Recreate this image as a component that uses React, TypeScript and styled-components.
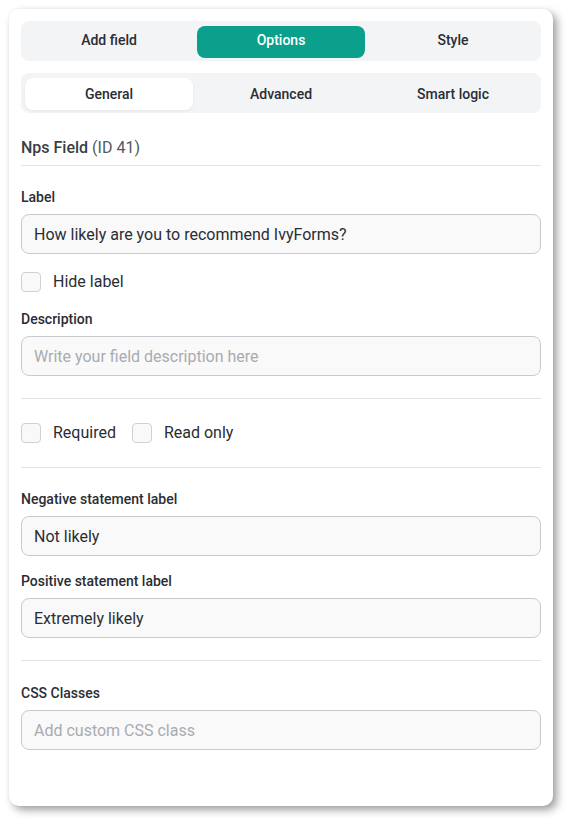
import React from "react";
import styled, { createGlobalStyle } from "styled-components";

const Global = createGlobalStyle`
  html, body { margin: 0; padding: 0; background: #ffffff; }
  body { font-family: Roboto, "Noto Sans", "Liberation Sans", sans-serif; color: #2a2d33; }
  * { box-sizing: border-box; }
`;

const Page = styled.div`
  padding: 9px 21px 22px 9px;
`;

const Card = styled.div`
  width: 544px;
  height: 797px;
  background: #ffffff;
  border-radius: 10px;
  padding: 12px 12px;
  box-shadow: 4px 4px 8px rgba(0, 0, 0, 0.38), 0 0 3px rgba(0, 0, 0, 0.04);
  display: flex;
  flex-direction: column;
`;

const TabBar = styled.div`
  display: grid;
  grid-template-columns: repeat(3, 1fr);
  height: 40px;
  padding: 5px 2px 3px;
  background: #f3f4f6;
  border-radius: 8px;
  & + & { margin-top: 12px; }
`;

const Tab = styled.div<{ $active?: boolean; $tone: "teal" | "white" }>`
  display: flex;
  align-items: center;
  justify-content: center;
  margin: 0 2px;
  padding-bottom: ${(p) => (p.$tone === "teal" ? "4px" : "0")};
  border-radius: 8px;
  font-size: 14px;
  font-weight: 500;
  color: ${(p) => (p.$active && p.$tone === "teal" ? "#ffffff" : "#2a2d33")};
  background: ${(p) =>
    p.$active ? (p.$tone === "teal" ? "#0aa08b" : "#ffffff") : "transparent"};
  box-shadow: ${(p) =>
    p.$active && p.$tone === "white" ? "0 1px 3px rgba(0,0,0,0.06)" : "none"};
`;

const Title = styled.div`
  margin-top: 25px;
  padding-bottom: 7px;
  border-bottom: 1px solid #e2e3e6;
  font-size: 16px;
  line-height: 20px;
  font-weight: 500;
  color: #3a3d42;
  span { font-weight: 400; color: #55585e; }
`;

const Divider = styled.div<{ $top: number }>`
  height: 1px;
  background: #e2e3e6;
  margin-top: ${(p) => p.$top}px;
`;

const FieldLabel = styled.div<{ $top: number }>`
  margin-top: ${(p) => p.$top}px;
  font-size: 14px;
  line-height: 20px;
  font-weight: 500;
  color: #2a2d33;
`;

const Input = styled.input`
  display: block;
  width: 100%;
  height: 40px;
  margin-top: 7px;
  padding: 0 12px;
  border: 1px solid #c9cacf;
  border-radius: 8px;
  background: #f9f9fa;
  font-family: inherit;
  font-size: 16px;
  color: #2a2d33;
  outline: none;
  &::placeholder { color: #a9abb0; }
`;

const CheckRow = styled.div<{ $top: number }>`
  display: flex;
  align-items: center;
  gap: 16px;
  margin-top: ${(p) => p.$top}px;
`;

const Check = styled.label`
  display: flex;
  align-items: center;
  gap: 12px;
  font-size: 16px;
  line-height: 20px;
  color: #2a2d33;
`;

const Box = styled.span`
  width: 20px;
  height: 20px;
  border: 1px solid #cfd0d4;
  border-radius: 4px;
  background: #f9f9fa;
`;

const mainTabs = ["Add field", "Options", "Style"];
const subTabs = ["General", "Advanced", "Smart logic"];

export default function App() {
  return (
    <>
      <Global />
      <Page>
        <Card>
          <TabBar>
            {mainTabs.map((t) => (
              <Tab key={t} $tone="teal" $active={t === "Options"}>
                {t}
              </Tab>
            ))}
          </TabBar>
          <TabBar>
            {subTabs.map((t) => (
              <Tab key={t} $tone="white" $active={t === "General"}>
                {t}
              </Tab>
            ))}
          </TabBar>

          <Title>
            Nps Field <span>(ID 41)</span>
          </Title>

          <FieldLabel $top={21}>Label</FieldLabel>
          <Input defaultValue="How likely are you to recommend IvyForms?" />

          <CheckRow $top={18}>
            <Check>
              <Box />
              Hide label
            </Check>
          </CheckRow>

          <FieldLabel $top={17}>Description</FieldLabel>
          <Input placeholder="Write your field description here" />

          <Divider $top={22} />

          <CheckRow $top={24}>
            <Check>
              <Box />
              Required
            </Check>
            <Check>
              <Box />
              Read only
            </Check>
          </CheckRow>

          <Divider $top={24} />

          <FieldLabel $top={21}>Negative statement label</FieldLabel>
          <Input defaultValue="Not likely" />

          <FieldLabel $top={15}>Positive statement label</FieldLabel>
          <Input defaultValue="Extremely likely" />

          <Divider $top={22} />

          <FieldLabel $top={22}>CSS Classes</FieldLabel>
          <Input placeholder="Add custom CSS class" />
        </Card>
      </Page>
    </>
  );
}
